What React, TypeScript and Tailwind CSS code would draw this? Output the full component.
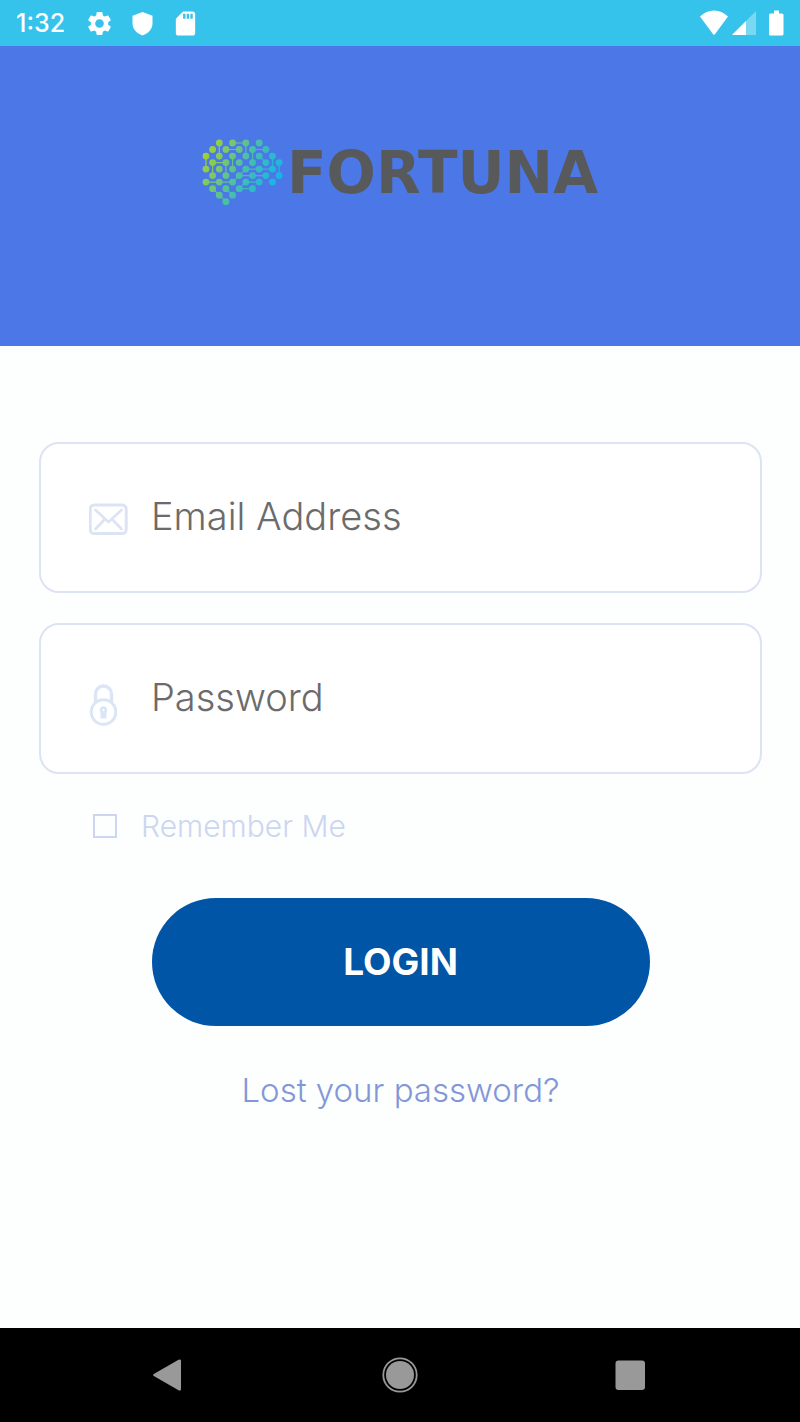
import { useState } from "react";
import type { ReactNode } from "react";
import { MdSdCard, MdSettings } from "react-icons/md";

// column, row
const LOGO_DOTS = [
  [2, 0], [4, 0], [6, 0], [8, 0],
  [1, 1], [3, 1], [5, 1], [7, 1], [9, 1],
  [0, 2], [2, 2], [4, 2], [6, 2], [8, 2], [10, 2],
  [1, 3], [3, 3], [5, 3], [7, 3], [9, 3], [11, 3],
  [0, 4], [2, 4], [4, 4], [6, 4], [8, 4], [10, 4],
  [1, 5], [3, 5], [5, 5], [7, 5], [9, 5], [11, 5],
  [0, 6], [2, 6], [4, 6], [6, 6], [8, 6], [10, 6],
  [1, 7], [3, 7], [5, 7], [7, 7],
  [2, 8], [4, 8],
  [3, 9],
];

// from column, from row, to column, to row
const LOGO_LINKS = [
  [4, 0, 6, 0], [3, 1, 5, 1], [7, 1, 9, 1], [1, 3, 3, 3],
  [6, 4, 8, 4], [8, 4, 10, 4], [7, 5, 9, 5], [5, 5, 7, 5],
  [0, 6, 2, 6], [2, 6, 4, 6], [6, 6, 8, 6], [5, 7, 7, 7],
  [2, 0, 2, 2], [6, 0, 6, 2], [0, 2, 0, 4], [4, 2, 4, 4],
  [1, 3, 1, 5], [3, 3, 3, 5], [7, 1, 7, 3], [10, 2, 10, 4],
  [11, 3, 11, 5], [8, 2, 9, 3], [5, 5, 6, 4], [4, 6, 5, 5],
  [1, 7, 2, 8], [2, 8, 3, 9], [3, 7, 4, 8], [5, 7, 6, 6],
];

const dotX = (col: number) => 4 + col * 6.65;
const dotY = (row: number) => 4 + row * 6.52;

const LogoMark = () => (
  <svg className="h-[67px] w-[81px] shrink-0" viewBox="0 0 81 67" aria-hidden="true">
    <defs>
      <linearGradient
        id="mark"
        gradientUnits="userSpaceOnUse"
        x1="6"
        y1="8"
        x2="76"
        y2="44"
      >
        <stop offset="0" stopColor="#a3cf34" />
        <stop offset="0.5" stopColor="#4bc0a4" />
        <stop offset="1" stopColor="#14b5ea" />
      </linearGradient>
    </defs>
    <g fill="url(#mark)">
      {LOGO_DOTS.map(([c, r]) => (
        <circle key={`${c}-${r}`} cx={dotX(c)} cy={dotY(r)} r="3.4" />
      ))}
    </g>
    <path
      d={LOGO_LINKS.map(
        ([a, b, c, d]) => `M${dotX(a)} ${dotY(b)}L${dotX(c)} ${dotY(d)}`
      ).join("")}
      stroke="url(#mark)"
      strokeWidth="1.2"
      fill="none"
    />
  </svg>
);

const StatusBar = () => (
  <div className="flex h-[46px] items-center justify-between bg-[#35c3ec] px-4 text-white">
    <div className="flex items-center">
      <span className="text-[25px] leading-8 font-medium">1:32</span>
      <div className="ml-5 flex items-center gap-[14px]">
        <MdSettings size={29} />
        <svg className="h-[29px] w-[29px]" viewBox="0 0 29 29" fill="currentColor">
          <path d="M14.5 3 24.500 6.700v7.300c0 6-4 10.300-10 12.500C8.500 24.300 4.500 20 4.500 14V6.700z" />
        </svg>
        <MdSdCard size={29} />
      </div>
    </div>
    <div className="flex items-center gap-1">
      <svg className="h-[26px] w-7" viewBox="0 0 28 26" fill="currentColor">
        <path d="M0 6.500C8-1.500 20-1.500 28 6.500L14.900 24.300q-.9 1-1.800 0z" />
      </svg>
      <svg className="h-[26px] w-6" viewBox="0 0 24 26" fill="currentColor">
        <path d="M24 1v24H0z" opacity="0.35" />
        <path d="M14 11v14H0z" />
      </svg>
      <svg className="ml-2 h-[26px] w-4" viewBox="0 0 16 26" fill="currentColor">
        <path d="M6 .5h5v3h3q1.500 0 1.500 1.500v19q0 1.500-1.500 1.500H2.500Q1 25.500 1 24V5q0-1.500 1.500-1.500H6z" />
      </svg>
    </div>
  </div>
);

const MailIcon = () => (
  <svg className="h-14 w-10" viewBox="0 0 40 56" fill="none" stroke="#dce3f3">
    <rect x="1.200" y="15" width="36" height="28.500" rx="4" strokeWidth="3" />
    <path
      d="M6.500 20 19.500 32 32.500 20M6.500 39l9.500-10M32.500 39 23 29"
      strokeWidth="2.600"
      strokeLinecap="round"
      strokeLinejoin="round"
    />
  </svg>
);

const LockIcon = () => (
  <svg className="h-14 w-10" viewBox="0 0 40 56" fill="none" stroke="#dbe5f6">
    <circle cx="14.500" cy="41" r="12.300" strokeWidth="3" />
    <path d="M6.500 31.500V23a8 8 0 0 1 16 0v8.500" strokeWidth="3.400" />
    <circle cx="14.500" cy="39" r="2.300" strokeWidth="2.800" />
    <path d="M14.500 41v6.500" strokeWidth="6" />
  </svg>
);

type FieldProps = {
  id: string;
  label: string;
  type: string;
  icon: ReactNode;
};

const Field = ({ id, label, type, icon }: FieldProps) => (
  <div className="flex h-[151px] items-center gap-[22px] rounded-[20px] border-2 border-[#dce3f3] bg-white px-12">
    <label htmlFor={id} className="shrink-0">
      {icon}
    </label>
    <input
      id={id}
      type={type}
      aria-label={label}
      placeholder={label}
      className="min-w-0 flex-1 bg-transparent pb-1 text-[38px] leading-[48px] font-light text-[#5f5f5f] outline-none placeholder:text-[#6b6b6b]"
    />
  </div>
);

const NavBar = () => (
  <nav className="flex h-[94px] items-center bg-black px-14">
    <button type="button" aria-label="Back" className="flex flex-1 justify-center">
      <svg className="h-9 w-9" viewBox="0 0 36 36" fill="#999">
        <path d="M25.500 2.800q2-1.100 2.500.8v29q-.5 1.700-2.500.6L.8 19q-1.500-1 0-2z" />
      </svg>
    </button>
    <button type="button" aria-label="Home" className="flex flex-1 justify-center">
      <svg className="h-9 w-9" viewBox="0 0 36 36">
        <circle cx="18" cy="18" r="16.700" fill="none" stroke="#999" strokeWidth="1.800" />
        <circle cx="18" cy="18" r="14" fill="#999" />
      </svg>
    </button>
    <button type="button" aria-label="Recent apps" className="flex flex-1 justify-center">
      <svg className="h-9 w-9" viewBox="0 0 36 36">
        <rect x="4.500" y="3.500" width="29.500" height="29.500" rx="3" fill="#999" />
      </svg>
    </button>
  </nav>
);

export default function App() {
  const [remember, setRemember] = useState(false);

  return (
    <div className="flex min-h-screen flex-col bg-[#fdfefe] font-['Inter',sans-serif]">
      <StatusBar />
      <header className="flex h-[300px] justify-center bg-[#4b78e6] pt-[93px]">
        <div className="flex h-[67px] items-center gap-1">
          <LogoMark />
          <span className="font-['DejaVu_Sans',sans-serif] text-[58px] leading-[64px] font-bold text-[#58595b]">
            FORTUNA
          </span>
        </div>
      </header>
      <form
        className="flex flex-1 flex-col pt-24 pr-[38px] pl-[39px]"
        onSubmit={(e) => e.preventDefault()}
      >
        <div className="flex flex-col gap-[30px]">
          <Field id="email" label="Email Address" type="email" icon={<MailIcon />} />
          <Field id="password" label="Password" type="password" icon={<LockIcon />} />
        </div>
        <div className="mt-8 flex items-center gap-6 pl-[54px]">
          <input
            id="remember"
            type="checkbox"
            checked={remember}
            onChange={(e) => setRemember(e.target.checked)}
            className="h-6 w-6 appearance-none border-2 border-[#ccd6f0] checked:bg-[#ccd6f0]"
          />
          <label
            htmlFor="remember"
            className="text-[30px] leading-10 font-light text-[#ccd6f0]"
          >
            Remember Me
          </label>
        </div>
        <button
          type="submit"
          className="mt-[52px] h-32 w-[498px] max-w-full self-center rounded-full bg-[#0055a6] text-[37px] leading-[48px] font-bold text-white"
        >
          LOGIN
        </button>
        <a
          href="#"
          className="mt-10 self-center text-[33px] leading-[48px] font-light text-[#8297d8]"
        >
          Lost your password?
        </a>
      </form>
      <NavBar />
    </div>
  );
}
